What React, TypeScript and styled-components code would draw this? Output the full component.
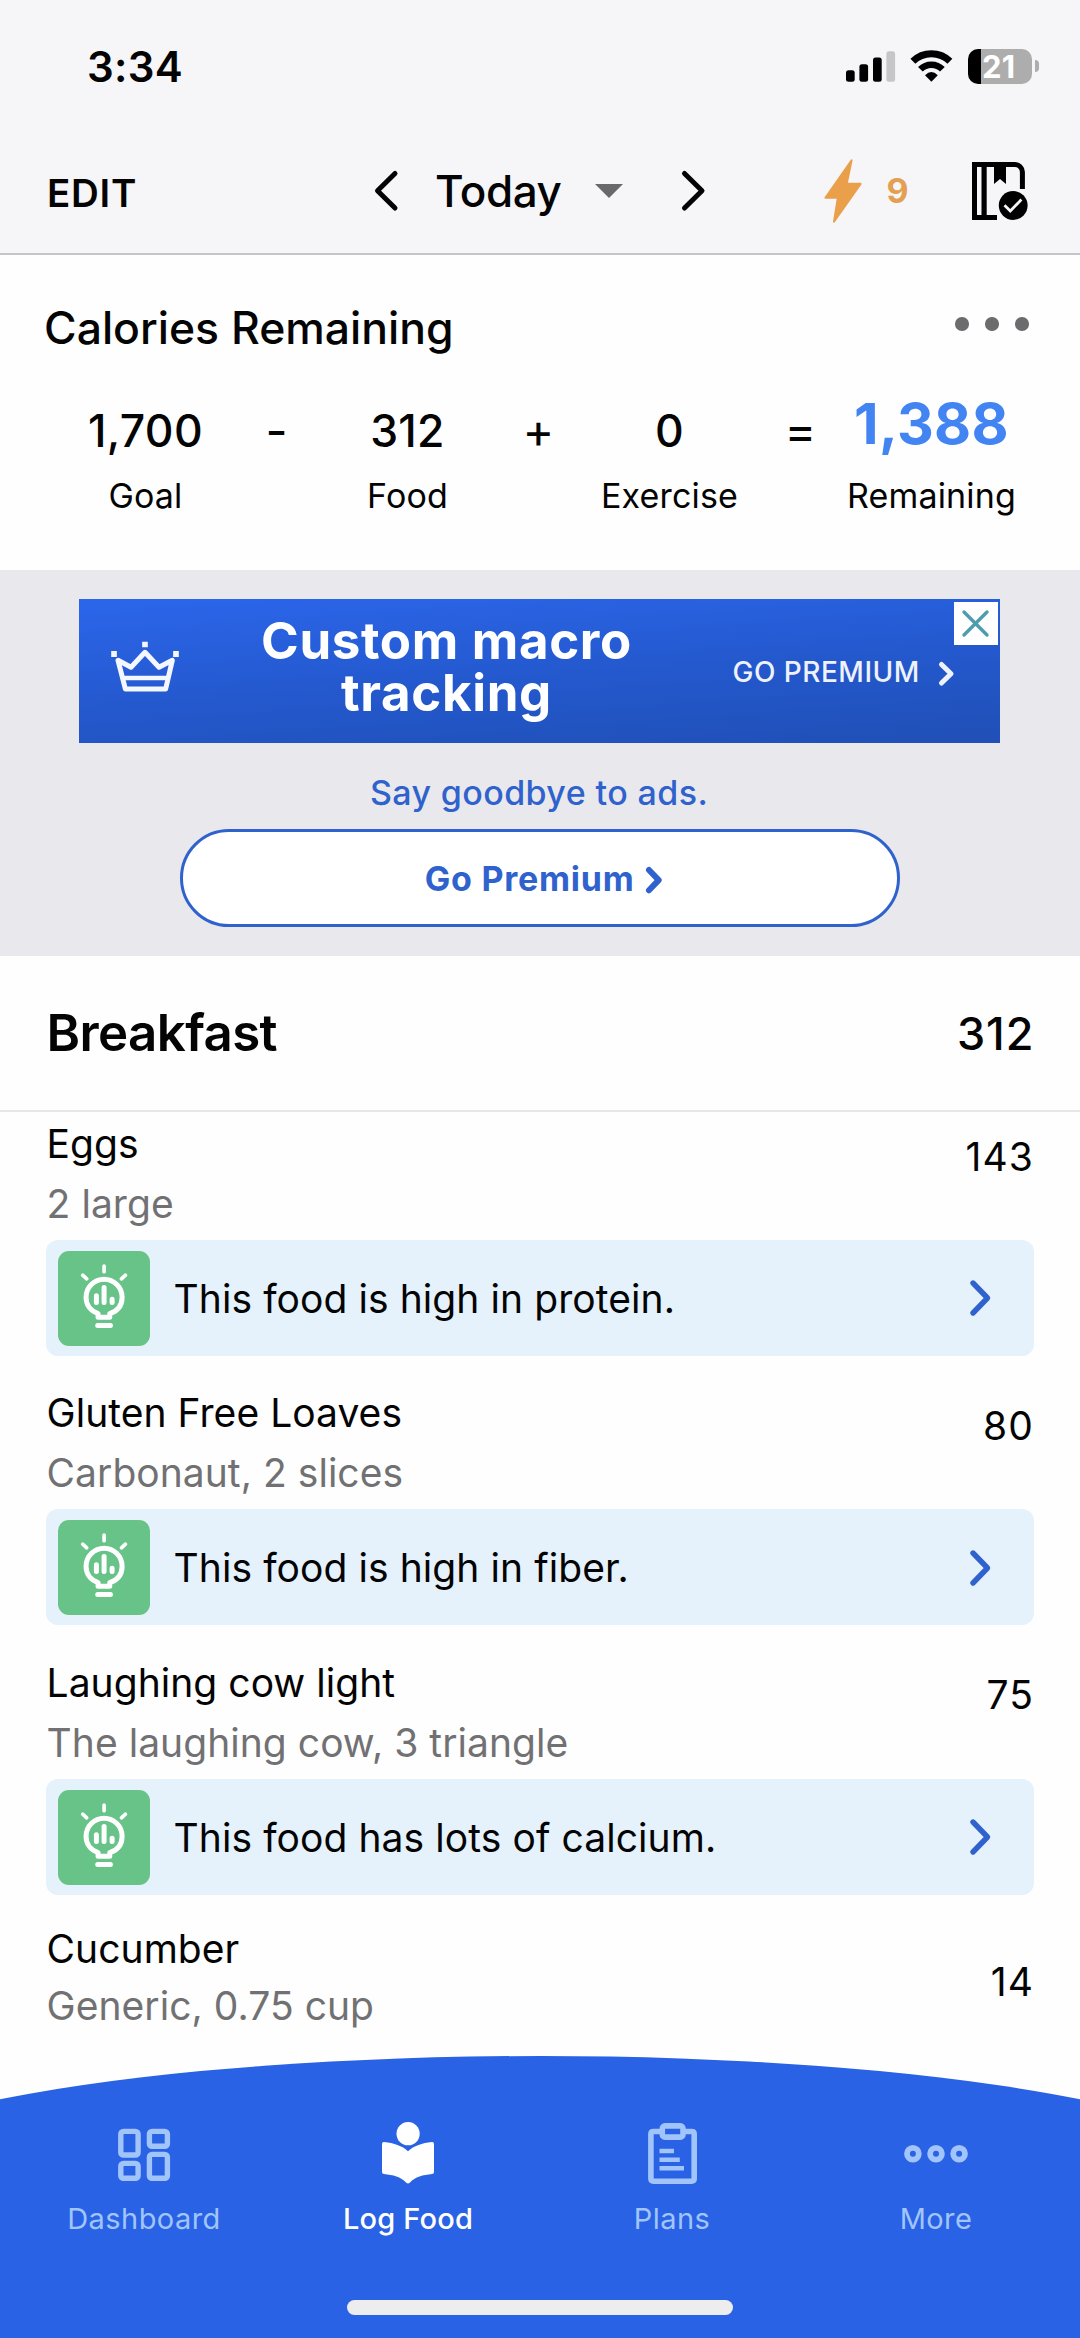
import React from 'react';
import styled, { createGlobalStyle } from 'styled-components';

const blue = '#2f62cc';
const navBlue = '#2962e4';
const navMuted = '#a1c4fb';

const GlobalStyle = createGlobalStyle`
  *, *::before { box-sizing: border-box; }
  body {
    margin: 0;
    background: #fff;
    color: #040404;
    font-family: "Inter", "Liberation Sans", sans-serif;
  }
  svg { display: block; flex: none; overflow: visible; }
`;

const Screen = styled.div`
  width: 1080px;
  height: 2338px;
  display: flex;
  flex-direction: column;
  overflow: hidden;
  background: #fefefe;
  white-space: nowrap;
`;

/* ---------- header ---------- */

const Header = styled.header`
  height: 255px;
  flex: none;
  background: #f6f6f8;
  border-bottom: 2px solid #c5c6c6;
`;

const StatusBar = styled.div`
  height: 132px;
  display: flex;
  align-items: center;
  padding: 0 41px 0 87px;
`;

const Clock = styled.span`
  flex: 1;
  padding-top: 1px;
  font-size: 42px;
  font-weight: 600;
  line-height: 50px;
  letter-spacing: 0.3px;
`;

const SignalIcon = styled.svg`
  margin-right: 15px;
`;

const WifiIcon = styled.svg`
  margin-right: 15px;
`;

const Battery = styled.div`
  width: 64px;
  height: 35px;
  border-radius: 10px;
  background: linear-gradient(90deg, #000 0 13.5px, #adadae 13.5px);
  color: #fff;
  font-size: 31px;
  font-weight: 700;
  line-height: 36px;
  letter-spacing: 0.2px;
  padding-left: 14px;
`;

const BatteryTip = styled.div`
  width: 4px;
  height: 12px;
  margin-left: 3px;
  border-radius: 0 4px 4px 0;
  background: #adadae;
`;

const TopNav = styled.div`
  height: 117px;
  display: flex;
  align-items: center;
`;

const EditButton = styled.span`
  width: 374.5px;
  padding: 4px 0 0 47px;
  font-size: 38.5px;
  font-weight: 600;
  line-height: 46px;
  letter-spacing: 0.75px;
`;

const DateLabel = styled.span`
  margin: 1px 34px 0 38px;
  font-size: 44px;
  font-weight: 500;
  line-height: 52px;
  letter-spacing: -0.45px;
`;

const DropTriangle = styled.span`
  margin: 1px 59px 0 0;
  border: 14px solid transparent;
  border-top: 14px solid #69696b;
  border-bottom: 0;
`;

const BoltIcon = styled.svg`
  margin-left: 119.5px;
`;

const Streak = styled.span`
  width: 86px;
  margin-left: 24px;
  color: #e3a050;
  font-size: 34px;
  font-weight: 700;
  line-height: 40px;
`;

/* ---------- calories ---------- */

const Summary = styled.section`
  height: 315px;
  flex: none;
  padding-top: 47.5px;
`;

const SummaryHead = styled.div`
  display: flex;
  justify-content: space-between;
  padding: 0 51.5px 0 44px;
`;

const SummaryTitle = styled.h2`
  margin: 0;
  font-size: 44.5px;
  font-weight: 500;
  line-height: 50px;
`;

const MoreDots = styled.div`
  display: flex;
  gap: 16.5px;
  padding-top: 14.5px;

  i {
    width: 13.5px;
    height: 13.5px;
    border-radius: 50%;
    background: #6c6c6e;
  }
`;

const Equation = styled.div`
  display: flex;
  margin-top: 53.5px;
  padding-left: 60.5px;
`;

const Term = styled.div`
  width: 170px;
  display: flex;
  flex-direction: column;
  align-items: center;
`;

const TermValue = styled.span<{ $total?: boolean }>`
  height: 50px;
  font-size: ${(p) => (p.$total ? 57 : 44.5)}px;
  font-weight: ${(p) => (p.$total ? 700 : 500)};
  line-height: ${(p) => (p.$total ? 35 : 50)}px;
  letter-spacing: 0.3px;
  color: ${(p) => (p.$total ? '#4384f3' : 'inherit')};
`;

const TermLabel = styled.span`
  margin-top: 20px;
  font-size: 34px;
  line-height: 40px;
  letter-spacing: 0.15px;
`;

const Operator = styled.span`
  width: 92px;
  font-size: 48px;
  line-height: 49px;
  text-align: center;
`;

/* ---------- advertising ---------- */

const AdSection = styled.section`
  height: 386px;
  flex: none;
  display: flex;
  flex-direction: column;
  align-items: center;
  padding: 29px 1px 0 0;
  background: #e9e9ed;
`;

const Banner = styled.div`
  position: relative;
  width: 921px;
  height: 144px;
  display: flex;
  align-items: center;
  padding-left: 31px;
  background: linear-gradient(176deg, #2b65e8 5%, #2459cf 50%, #2050b8 95%);
  color: #fff;
`;

const Crown = styled.svg`
  margin-bottom: 9px;
`;

const BannerTitle = styled.div`
  width: 371px;
  margin: 0 100.5px 7.5px 81px;
  font-size: 51px;
  font-weight: 700;
  line-height: 52.5px;
  letter-spacing: 0.65px;
  text-align: center;
`;

const BannerAction = styled.div`
  display: flex;
  align-items: center;
  gap: 19.5px;
  padding-top: 2px;
  color: #eef2fd;
  font-size: 28px;
  font-weight: 500;
  line-height: 34px;
  letter-spacing: 0.5px;

  svg { margin-top: 4px; }
`;

const AdClose = styled.div`
  position: absolute;
  top: 3px;
  right: 2.5px;
  width: 43.5px;
  height: 43px;
  display: grid;
  place-items: center;
  background: #fff;
`;

const AdNote = styled.p`
  margin: 28.5px 1px 0 0;
  color: ${blue};
  font-size: 34px;
  font-weight: 500;
  line-height: 41px;
  letter-spacing: 0.4px;
`;

const PremiumButton = styled.button`
  width: 720px;
  height: 98px;
  margin-top: 16.5px;
  padding: 1px 0 0 8px;
  display: flex;
  align-items: center;
  justify-content: center;
  gap: 12px;
  border: 3px solid ${blue};
  border-radius: 49px;
  background: #fff;
  color: ${blue};
  font: 700 34px/40px "Inter", "Liberation Sans", sans-serif;
  letter-spacing: 0.75px;

  svg { margin-top: 3px; }
`;

/* ---------- meal ---------- */

const MealHead = styled.div`
  height: 156px;
  flex: none;
  display: flex;
  align-items: center;
  justify-content: space-between;
  padding: 1px 45.5px 0 46.5px;
  border-bottom: 2px solid #e6e6e7;
`;

const MealName = styled.h2`
  margin: 0 0 1px;
  font-size: 51px;
  font-weight: 600;
  line-height: 60px;
  letter-spacing: -0.6px;
`;

const MealTotal = styled.span`
  font-size: 45px;
  font-weight: 500;
  line-height: 54px;
  letter-spacing: 1px;
`;

const FoodItem = styled.article<{ $compact?: boolean }>`
  height: ${(p) => (p.$compact ? 'auto' : '269.3px')};
  flex: none;
  padding: ${(p) => (p.$compact ? 6.1 : 9)}px 46px 0;
`;

const FoodRow = styled.div`
  display: flex;
  justify-content: space-between;
`;

const FoodText = styled.div<{ $compact?: boolean }>`
  display: grid;
  gap: ${(p) => (p.$compact ? 11 : 14.2)}px;
  padding-left: 0.6px;
  font-size: 39px;
  line-height: 46px;
  letter-spacing: 0.04px;
`;

const FoodDetail = styled.span`
  color: #717173;
`;

const FoodCalories = styled.span<{ $compact?: boolean }>`
  padding-top: ${(p) => (p.$compact ? 33.5 : 12.8)}px;
  font-size: 39px;
  line-height: 46px;
  letter-spacing: 1.1px;
`;

const Insight = styled.div`
  height: 116px;
  margin-top: 12.8px;
  display: flex;
  align-items: center;
  padding: 1px 43.5px 0 11.5px;
  border-radius: 12px;
  background: #e5f2fc;
`;

const InsightText = styled.span`
  flex: 1;
  margin-left: 23.5px;
  padding-top: 1px;
  font-size: 39px;
  line-height: 46px;
  letter-spacing: 0.08px;
`;

const InsightBadge = styled.div`
  width: 92.5px;
  height: 95px;
  border-radius: 11px;
  background: #67c388;
`;

/* ---------- bottom navigation ---------- */

const BottomNav = styled.nav`
  position: relative;
  height: 282px;
  flex: none;
  margin-top: auto;
  overflow: hidden;

  &::before {
    content: "";
    position: absolute;
    top: 0;
    left: -180px;
    width: 1440px;
    height: 100%;
    border-radius: 720px 720px 0 0 / 128px 128px 0 0;
    background: ${navBlue};
  }
`;

const Tabs = styled.div`
  position: relative;
  display: flex;
  padding: 66px 12px 0;
`;

const Tab = styled.div<{ $active?: boolean }>`
  width: 264px;
  display: flex;
  flex-direction: column;
  align-items: center;
  gap: 15.5px;
  color: ${(p) => (p.$active ? '#fff' : navMuted)};
  font-size: 29px;
  font-weight: ${(p) => (p.$active ? 500 : 400)};
  line-height: 34px;
  letter-spacing: ${(p) => (p.$active ? 0.2 : 0.45)}px;
`;

const HomeIndicator = styled.div`
  position: relative;
  width: 386px;
  height: 15px;
  margin: 64.5px auto 0;
  border-radius: 8px;
  background: #ededef;
`;

/* ---------- drawings ---------- */

type ChevronProps = { w: number; h: number; s: number; left?: boolean };

const Chevron = ({ w, h, s, left }: ChevronProps) => {
  const a = left ? w - s / 2 : s / 2;
  const b = left ? s / 2 : w - s / 2;
  return (
    <svg width={w} height={h} viewBox={`0 0 ${w} ${h}`}>
      <path
        d={`M${a} ${s / 2} L${b} ${h / 2} L${a} ${h - s / 2}`}
        fill="none"
        stroke="currentColor"
        strokeWidth={s}
        strokeLinecap="round"
        strokeLinejoin="round"
      />
    </svg>
  );
};

const BookIcon = () => (
  <svg width="56" height="58" viewBox="0 0 56 58">
    <path d="M50.4 27V10A7.5 7.5 0 0 0 42.9 2.5H2.5V55.5H25" fill="none" stroke="#000" strokeWidth="5" />
    <path d="M12.1 2V56" stroke="#000" strokeWidth="5.2" />
    <path d="M22 3H34V22L28 17L22 22Z" />
    <circle cx="41.2" cy="43.5" r="17.5" fill="#f6f6f8" />
    <circle cx="41.2" cy="43.5" r="14.4" />
    <path d="M32.5 43.3L38.3 49L49.4 37.6" fill="none" stroke="#f6f6f8" strokeWidth="2.8" />
  </svg>
);

const BulbIcon = () => (
  <svg width="92.5" height="95" viewBox="53 64 277 284" fill="none" stroke="#fff" strokeLinecap="round">
    <path d="M173 262V251C149 243 137 224 137 202A54 54 0 0 1 245 202C245 224 233 243 208 251V262Z" strokeWidth="15" strokeLinejoin="round" />
    <path d="M172 286.5H210" strokeWidth="15" />
    <path d="M168 198V218M191 173V218M215 208V218" strokeWidth="15" />
    <path d="M191 109V126M127 136L139 147M255 136L243 147" strokeWidth="11" />
  </svg>
);

const CrownIcon = () => (
  <Crown width="70" height="53.3" viewBox="150 180 210 160" fill="none" stroke="#f4f7ff" strokeWidth="15" strokeLinejoin="round">
    <path d="M174 241L213 262L255 217L297 262L337 241L317 327H196Z" />
    <path d="M188 294H324" strokeWidth="13" />
    <path d="M162 213V231M255 185V202M348 213V231" strokeWidth="17" />
  </Crown>
);

const DashboardIcon = () => (
  <svg width="64" height="64" fill="none" stroke="currentColor" strokeWidth="5.4">
    <rect x="8.8" y="9.4" width="17.3" height="23.6" rx="2.6" />
    <rect x="37.4" y="9.4" width="18" height="14.9" rx="2.6" />
    <rect x="8.8" y="41.4" width="17.3" height="14.9" rx="2.6" />
    <rect x="37.4" y="32.4" width="18" height="23.9" rx="2.6" />
  </svg>
);

const ReaderIcon = () => (
  <svg width="64" height="64" fill="currentColor">
    <circle cx="32.1" cy="11.7" r="11.6" />
    <path d="M8 20.1C18 21 26 24 32 29.2C38 24 46 21 56 20.1Q58 20 58 22V50Q58 52 56 52.1C47 53 39 55 34 60.5Q32 62.3 30 60.5C25 55 17 53 8 52.1Q6 52 6 50V22Q6 20 8 20.1Z" />
  </svg>
);

const PlansIcon = () => (
  <svg width="64" height="64" fill="none" stroke="currentColor" strokeWidth="5.6">
    <path d="M22 9.5H13.5Q10.9 9.5 10.9 12.1V56.6Q10.9 59.2 13.5 59.2H51.6Q54.2 59.2 54.2 56.6V12.1Q54.2 9.5 51.6 9.5H43" />
    <rect x="22.3" y="3.9" width="20.7" height="11.2" rx="2.6" />
    <path d="M19.5 29H34M19.5 37.7H39.8M19.5 46.3H44" strokeWidth="4.6" />
  </svg>
);

const MoreIcon = () => (
  <svg width="64" height="64" fill="none" stroke="currentColor" strokeWidth="5.8">
    <circle cx="8.9" cy="31.7" r="5.9" />
    <circle cx="32" cy="31.7" r="5.9" />
    <circle cx="55.1" cy="31.7" r="5.9" />
  </svg>
);

/* ---------- data ---------- */

type Food = { name: string; detail: string; calories: number; insight?: string };

const foods: Food[] = [
  { name: 'Eggs', detail: '2 large', calories: 143, insight: 'This food is high in protein.' },
  { name: 'Gluten Free Loaves', detail: 'Carbonaut, 2 slices', calories: 80, insight: 'This food is high in fiber.' },
  { name: 'Laughing cow light', detail: 'The laughing cow, 3 triangle', calories: 75, insight: 'This food has lots of calcium.' },
  { name: 'Cucumber', detail: 'Generic, 0.75 cup', calories: 14 },
];

const tabs = [
  { label: 'Dashboard', icon: <DashboardIcon /> },
  { label: 'Log Food', icon: <ReaderIcon />, active: true },
  { label: 'Plans', icon: <PlansIcon /> },
  { label: 'More', icon: <MoreIcon /> },
];

const FoodEntry = ({ food }: { food: Food }) => {
  const compact = !food.insight;
  return (
    <FoodItem $compact={compact}>
      <FoodRow>
        <FoodText $compact={compact}>
          <span>{food.name}</span>
          <FoodDetail>{food.detail}</FoodDetail>
        </FoodText>
        <FoodCalories $compact={compact}>{food.calories}</FoodCalories>
      </FoodRow>
      {food.insight && (
        <Insight>
          <InsightBadge>
            <BulbIcon />
          </InsightBadge>
          <InsightText>{food.insight}</InsightText>
          <svg width="21" height="36" viewBox="0 0 21 36">
            <path d="M3 3L17.5 18L3 33" fill="none" stroke={blue} strokeWidth="5.4" strokeLinecap="round" strokeLinejoin="round" />
          </svg>
        </Insight>
      )}
    </FoodItem>
  );
};

export default function App() {
  return (
    <Screen>
      <GlobalStyle />
      <Header>
        <StatusBar>
          <Clock>3:34</Clock>
          <SignalIcon width="49" height="31" viewBox="0 0 49 31">
            <rect x="0" y="19.2" width="8.7" height="11.6" rx="2.5" />
            <rect x="13.4" y="13.2" width="8.7" height="17.6" rx="2.5" />
            <rect x="27" y="6.6" width="8.7" height="24.2" rx="2.5" />
            <rect x="40.4" y="0.2" width="8.7" height="30.6" rx="2.5" fill="#c6c6c8" />
          </SignalIcon>
          <WifiIcon width="42.8" height="32" viewBox="0 0 42.8 32">
            <path d="M2.9 11.2A26.6 26.6 0 0 1 39.9 11.2" fill="none" stroke="#000" strokeWidth="7" />
            <path d="M10.4 19.3A15.4 15.4 0 0 1 32.4 19.3" fill="none" stroke="#000" strokeWidth="6.6" />
            <path d="M15 25.3Q21.4 18.8 27.8 25.3L21.4 31.8Z" />
          </WifiIcon>
          <Battery>21</Battery>
          <BatteryTip />
        </StatusBar>
        <TopNav>
          <EditButton>EDIT</EditButton>
          <Chevron w={22.5} h={39.5} s={5} left />
          <DateLabel>Today</DateLabel>
          <DropTriangle />
          <Chevron w={22.5} h={39.5} s={5} />
          <BoltIcon width="38" height="64" viewBox="0 0 38 64">
            <path d="M27.6 1.4L22.7 24.8H36.6L10 62.6L13.8 38.8H1.4Z" fill="#ea9f4a" stroke="#ea9f4a" strokeWidth="2" strokeLinejoin="round" />
          </BoltIcon>
          <Streak>9</Streak>
          <BookIcon />
        </TopNav>
      </Header>

      <Summary>
        <SummaryHead>
          <SummaryTitle>Calories Remaining</SummaryTitle>
          <MoreDots>
            <i />
            <i />
            <i />
          </MoreDots>
        </SummaryHead>
        <Equation>
          <Term>
            <TermValue>1,700</TermValue>
            <TermLabel>Goal</TermLabel>
          </Term>
          <Operator>-</Operator>
          <Term>
            <TermValue>312</TermValue>
            <TermLabel>Food</TermLabel>
          </Term>
          <Operator>+</Operator>
          <Term>
            <TermValue>0</TermValue>
            <TermLabel>Exercise</TermLabel>
          </Term>
          <Operator>=</Operator>
          <Term>
            <TermValue $total>1,388</TermValue>
            <TermLabel>Remaining</TermLabel>
          </Term>
        </Equation>
      </Summary>

      <AdSection>
        <Banner>
          <CrownIcon />
          <BannerTitle>
            Custom macro
            <br />
            tracking
          </BannerTitle>
          <BannerAction>
            GO PREMIUM
            <Chevron w={14.5} h={23.5} s={5} />
          </BannerAction>
          <AdClose>
            <svg width="27" height="27" viewBox="0 0 27 27">
              <path d="M2 2L25 25M25 2L2 25" stroke="#4d9dad" strokeWidth="3.4" strokeLinecap="round" />
            </svg>
          </AdClose>
        </Banner>
        <AdNote>Say goodbye to ads.</AdNote>
        <PremiumButton>
          Go Premium
          <Chevron w={15.7} h={26.3} s={6} />
        </PremiumButton>
      </AdSection>

      <MealHead>
        <MealName>Breakfast</MealName>
        <MealTotal>312</MealTotal>
      </MealHead>
      {foods.map((food) => (
        <FoodEntry key={food.name} food={food} />
      ))}

      <BottomNav>
        <Tabs>
          {tabs.map((tab) => (
            <Tab key={tab.label} $active={tab.active}>
              {tab.icon}
              {tab.label}
            </Tab>
          ))}
        </Tabs>
        <HomeIndicator />
      </BottomNav>
    </Screen>
  );
}
